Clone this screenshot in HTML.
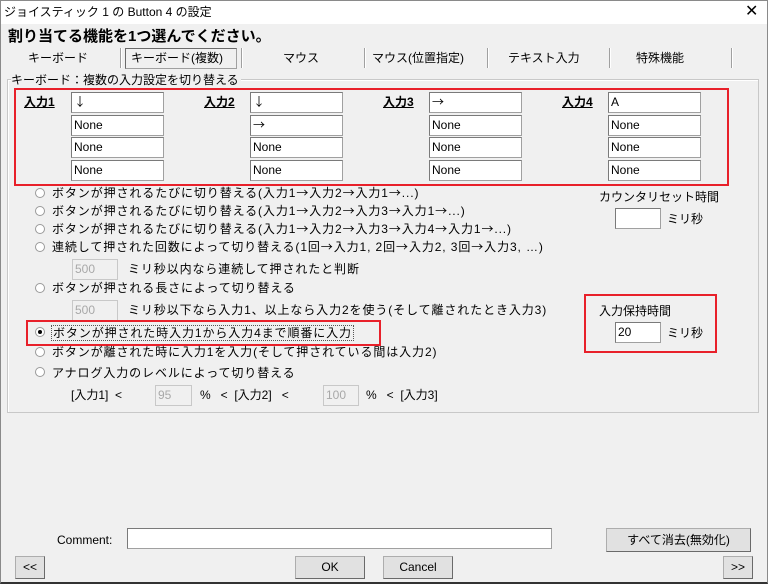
<!DOCTYPE html>
<html><head><meta charset="utf-8"><style>
*{box-sizing:border-box;margin:0;padding:0}
body{width:768px;height:584px;background:#f0f0f0;font-family:"Liberation Sans","Noto Sans CJK JP",sans-serif;font-size:12px;color:#000;position:relative;overflow:hidden}
.a{position:absolute;white-space:nowrap;line-height:14px}
.r{letter-spacing:0.9px}
.j{font-family:"Noto Sans CJK JP",sans-serif}
.in{position:absolute;background:#fff;border:1px solid #a0a0a0;border-top-color:#7a7a7a;border-left-color:#7a7a7a;height:21px;font-size:12px;line-height:18px;padding-left:2px;white-space:nowrap}
.dis{background:#f0f0f0;color:#a8a8a8;border-color:#c8c8c8}
.rb{position:absolute;width:10px;height:10px;border:1px solid #9a9a9a;border-radius:50%;background:#fff}
.btn{position:absolute;background:#e1e1e1;border:1px solid #adadad;border-right-color:#6a6a6a;border-bottom-color:#6a6a6a;text-align:center;font-size:12px;line-height:20px}
.sep{position:absolute;top:48px;width:2px;height:20px;border-left:1px solid #a0a0a0;border-right:1px solid #fff}
.red{position:absolute;border:2px solid #e8202a}
.lbl{text-decoration:underline;font-weight:bold}
</style></head><body>
<div style="position:absolute;left:0;top:0;width:768px;height:24px;background:#fff"></div>
<div style="position:absolute;left:0;top:0;width:768px;height:584px;border:1px solid #8a8a8a;border-bottom:2px solid #333"></div>
<div class="a" style="left:4px;top:5px;font-size:12px">ジョイスティック 1 の Button 4 の設定</div>
<div class="a" style="left:745px;top:4px;font-size:16px;line-height:16px">✕</div>
<div class="a" style="left:8px;top:28px;font-size:15px;line-height:17px;font-weight:bold">割り当てる機能を1つ選んでください。</div>

<div class="a" style="left:28px;top:51px">キーボード</div>
<div class="sep" style="left:120px"></div>
<div style="position:absolute;left:125px;top:48px;width:112px;height:21px;border:1px solid #a0a0a0;border-top-color:#6a6a6a;border-left-color:#6a6a6a"></div>
<div class="a" style="left:131px;top:51px">キーボード(複数)</div>
<div class="sep" style="left:241px"></div>
<div class="a" style="left:283px;top:51px">マウス</div>
<div class="sep" style="left:364px"></div>
<div class="a" style="left:372px;top:51px">マウス(位置指定)</div>
<div class="sep" style="left:487px"></div>
<div class="a" style="left:508px;top:51px">テキスト入力</div>
<div class="sep" style="left:609px"></div>
<div class="a" style="left:636px;top:51px">特殊機能</div>
<div class="sep" style="left:731px"></div>

<div style="position:absolute;left:7px;top:79px;width:752px;height:334px;border:1px solid #c8c8c8;box-shadow:inset 1px 1px 0 #fff"></div>
<div class="a" style="left:11px;top:73px;background:#f0f0f0;padding-right:2px">キーボード：複数の入力設定を切り替える</div>

<div class="red" style="left:14px;top:88px;width:715px;height:98px"></div>
<div class="a lbl" style="left:24px;top:95px">入力1</div>
<div class="a lbl" style="left:204px;top:95px">入力2</div>
<div class="a lbl" style="left:383px;top:95px">入力3</div>
<div class="a lbl" style="left:562px;top:95px">入力4</div>

<div class="in j" style="left:71px;top:92px;width:93px">↓</div>
<div class="in" style="left:71px;top:115px;width:93px">None</div>
<div class="in" style="left:71px;top:137px;width:93px">None</div>
<div class="in" style="left:71px;top:160px;width:93px">None</div>
<div class="in j" style="left:250px;top:92px;width:93px">↓</div>
<div class="in j" style="left:250px;top:115px;width:93px">→</div>
<div class="in" style="left:250px;top:137px;width:93px">None</div>
<div class="in" style="left:250px;top:160px;width:93px">None</div>
<div class="in j" style="left:429px;top:92px;width:93px">→</div>
<div class="in" style="left:429px;top:115px;width:93px">None</div>
<div class="in" style="left:429px;top:137px;width:93px">None</div>
<div class="in" style="left:429px;top:160px;width:93px">None</div>
<div class="in" style="left:608px;top:92px;width:93px">A</div>
<div class="in" style="left:608px;top:115px;width:93px">None</div>
<div class="in" style="left:608px;top:137px;width:93px">None</div>
<div class="in" style="left:608px;top:160px;width:93px">None</div>

<div class="rb" style="left:35px;top:188px"></div><div class="a r" style="left:52px;top:186px">ボタンが押されるたびに切り替える(入力1<span class="j">→</span>入力2<span class="j">→</span>入力1<span class="j">→</span>...)</div>
<div class="rb" style="left:35px;top:206px"></div><div class="a r" style="left:52px;top:204px">ボタンが押されるたびに切り替える(入力1<span class="j">→</span>入力2<span class="j">→</span>入力3<span class="j">→</span>入力1<span class="j">→</span>...)</div>
<div class="rb" style="left:35px;top:224px"></div><div class="a r" style="left:52px;top:222px">ボタンが押されるたびに切り替える(入力1<span class="j">→</span>入力2<span class="j">→</span>入力3<span class="j">→</span>入力4<span class="j">→</span>入力1<span class="j">→</span>...)</div>
<div class="rb" style="left:35px;top:242px"></div><div class="a r" style="left:52px;top:240px">連続して押された回数によって切り替える(1回<span class="j">→</span>入力1, 2回<span class="j">→</span>入力2, 3回<span class="j">→</span>入力3, …)</div>
<div class="in dis" style="left:72px;top:259px;width:46px">500</div><div class="a r" style="left:128px;top:262px">ミリ秒以内なら連続して押されたと判断</div>
<div class="rb" style="left:35px;top:283px"></div><div class="a r" style="left:52px;top:281px">ボタンが押される長さによって切り替える</div>
<div class="in dis" style="left:72px;top:300px;width:46px">500</div><div class="a r" style="left:128px;top:303px">ミリ秒以下なら入力1、以上なら入力2を使う(そして離されたとき入力3)</div>
<div class="red" style="left:26px;top:320px;width:355px;height:26px"></div>
<div class="rb" style="left:35px;top:327px"></div><div style="position:absolute;left:38px;top:330px;width:4px;height:4px;background:#000;border-radius:50%"></div>
<div class="a r" style="left:51px;top:325px;border:1px dotted #555;padding:0 1px">ボタンが押された時入力1から入力4まで順番に入力</div>
<div class="rb" style="left:35px;top:347px"></div><div class="a r" style="left:52px;top:345px">ボタンが離された時に入力1を入力(そして押されている間は入力2)</div>
<div class="rb" style="left:35px;top:367px"></div><div class="a r" style="left:52px;top:366px">アナログ入力のレベルによって切り替える</div>
<div class="a" style="left:71px;top:388px">[入力1]&nbsp;&nbsp;&lt;</div>
<div class="in dis" style="left:155px;top:385px;width:37px">95</div>
<div class="a" style="left:200px;top:388px">%&nbsp;&nbsp;&nbsp;&lt;&nbsp;&nbsp;[入力2]&nbsp;&nbsp;&nbsp;&lt;</div>
<div class="in dis" style="left:323px;top:385px;width:36px">100</div>
<div class="a" style="left:366px;top:388px">%&nbsp;&nbsp;&nbsp;&lt;&nbsp;&nbsp;[入力3]</div>

<div class="a" style="left:599px;top:190px">カウンタリセット時間</div>
<div class="in" style="left:615px;top:208px;width:46px"></div>
<div class="a" style="left:667px;top:212px">ミリ秒</div>
<div class="red" style="left:584px;top:294px;width:133px;height:59px"></div>
<div class="a" style="left:599px;top:304px">入力保持時間</div>
<div class="in" style="left:615px;top:322px;width:46px">20</div>
<div class="a" style="left:667px;top:326px">ミリ秒</div>

<div class="a" style="left:57px;top:533px">Comment:</div>
<div class="in" style="left:127px;top:528px;width:425px"></div>
<div class="btn" style="left:606px;top:528px;width:145px;height:24px;line-height:22px">すべて消去(無効化)</div>
<div class="btn" style="left:15px;top:556px;width:30px;height:23px">&lt;&lt;</div>
<div class="btn" style="left:295px;top:556px;width:70px;height:23px">OK</div>
<div class="btn" style="left:383px;top:556px;width:70px;height:23px">Cancel</div>
<div class="btn" style="left:723px;top:556px;width:30px;height:23px">&gt;&gt;</div>
</body></html>
